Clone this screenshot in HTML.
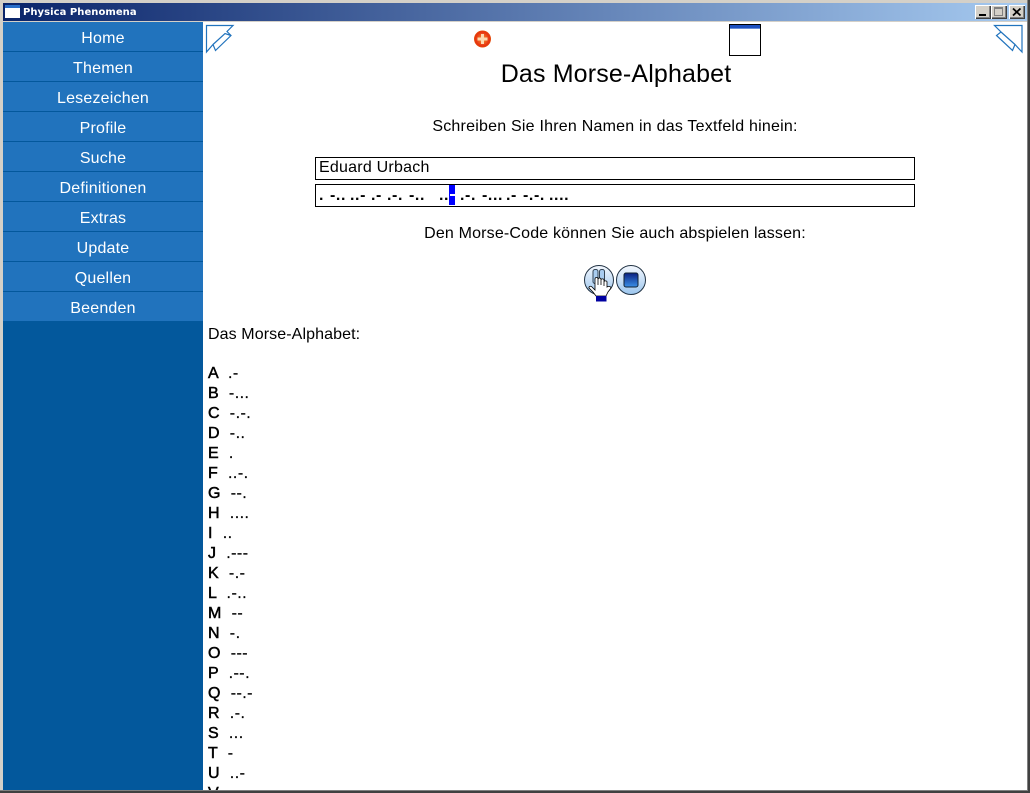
<!DOCTYPE html>
<html><head><meta charset="utf-8"><style>
html,body{margin:0;padding:0;width:1030px;height:793px;overflow:hidden;background:#fff;font-family:"Liberation Sans",Arial,sans-serif;color:#000}
div,span{position:absolute;white-space:pre}
.m{left:3px;width:200px;height:29px;background:#2173bd;border-bottom:1px solid #03589c;color:#fff;font-size:16px;line-height:34px;text-align:center;letter-spacing:.2px;overflow:hidden}
.t{font-size:16px;line-height:20px;height:20px;left:208px;letter-spacing:.45px;-webkit-text-stroke:.25px #000}
.t b{font-weight:normal;-webkit-text-stroke:.5px #000}
.c{left:203px;width:824px;text-align:center;font-size:16px;line-height:20px;letter-spacing:.22px}
.g{top:186px;font-size:16px;line-height:20px;font-weight:bold;letter-spacing:.6px}
.wb{top:5px;width:16px;height:14px;background:#d4d0c8;box-shadow:inset 1px 1px 0 #fff,inset -1px -1px 0 #404040,inset -2px -2px 0 #808080}
</style></head><body>
<div style="left:0;top:0;width:1030px;height:793px;background:#d4d0c8"></div>
<div style="left:3px;top:3px;width:1024px;height:18px;background:linear-gradient(90deg,#0a246a,#a6caf0)"></div>
<svg style="position:absolute;left:5px;top:5px" width="15" height="13"><rect width="15" height="13" fill="#fff"/><rect width="15" height="3" fill="#2a6fc9"/></svg>
<div style="left:23px;top:5px;font-size:10px;line-height:16px;font-weight:bold;color:#fff;font-family:'DejaVu Sans',sans-serif;letter-spacing:.05px">Physica Phenomena</div>
<div class="wb" style="left:975px"></div>
<div style="left:979px;top:14px;width:7px;height:2px;background:#000"></div>
<div class="wb" style="left:991px"></div>
<div style="left:994px;top:7px;width:9px;height:9px;border:1px solid #808080;border-top-width:2px;box-sizing:border-box"></div>
<div class="wb" style="left:1009px"></div>
<svg style="position:absolute;left:1009px;top:5px" width="16" height="14"><path d="M4 3.500L11.500 10.500M11.500 3.500L4 10.500" stroke="#000" stroke-width="1.800"/></svg>
<div style="left:3px;top:22px;width:1024px;height:768px;background:#fff"></div>
<div style="left:1027px;top:0;width:1px;height:793px;background:#808080"></div>
<div style="left:1028px;top:0;width:2px;height:793px;background:#404040"></div>
<div style="left:0;top:790px;width:1027px;height:1px;background:#808080"></div>
<div style="left:0;top:791px;width:1030px;height:2px;background:#404040"></div>
<div style="left:3px;top:22px;width:200px;height:768px;background:#03589c"></div>
<div class="m" style="top:22px">Home</div>
<div class="m" style="top:52px">Themen</div>
<div class="m" style="top:82px">Lesezeichen</div>
<div class="m" style="top:112px">Profile</div>
<div class="m" style="top:142px">Suche</div>
<div class="m" style="top:172px">Definitionen</div>
<div class="m" style="top:202px">Extras</div>
<div class="m" style="top:232px">Update</div>
<div class="m" style="top:262px">Quellen</div>
<div class="m" style="top:292px;border-bottom:0">Beenden</div>

<svg style="position:absolute;left:205px;top:24px" width="30" height="30" fill="none" stroke="#2173bd" stroke-width="1.200"><path d="M1.500 1.500H28L22 7.500L26 11.500L10.500 26.500L8 20.500L1.500 28ZM8 20.500L20 9.500L26 11.500"/></svg>
<svg style="position:absolute;left:993px;top:24px" width="30" height="30" fill="none" stroke="#2173bd" stroke-width="1.200"><path d="M1.500 1.500H29V28L22 20.500L19.500 26.500L3.500 11.500L8 8ZM8 8L22 20.500"/></svg>
<svg style="position:absolute;left:473px;top:30px" width="19" height="18"><defs><radialGradient id="r" cx=".5" cy=".5" r=".55"><stop offset="0" stop-color="#f5a030"/><stop offset=".75" stop-color="#e83010"/><stop offset="1" stop-color="#e06000"/></radialGradient></defs><circle cx="9.500" cy="9" r="8.500" fill="url(#r)"/><path d="M9.500 4V14M4.500 9H14.500" stroke="#fbd8b0" stroke-width="3"/></svg>
<div style="left:729px;top:24px;width:30px;height:30px;border:1px solid #000;background:#fff"></div>
<div style="left:730px;top:25px;width:30px;height:4px;background:linear-gradient(#1c50c0 70%,#9db8e8)"></div>

<div class="c" style="top:60px;font-size:25px;line-height:28px;left:204px;letter-spacing:.15px">Das Morse-Alphabet</div>
<div class="c" style="top:117px">Schreiben Sie Ihren Namen in das Textfeld hinein:</div>
<div style="left:315px;top:157px;width:598px;height:21px;border:1px solid #000"></div>
<div style="left:319px;top:158px;font-size:16px;line-height:20px;letter-spacing:.23px">Eduard Urbach</div>
<div style="left:315px;top:184px;width:598px;height:21px;border:1px solid #000"></div>
<div class="g" style="left:319px">.</div>
<div class="g" style="left:330px">-..</div>
<div class="g" style="left:350px">..-</div>
<div class="g" style="left:371px">.-</div>
<div class="g" style="left:387px">.-.</div>
<div class="g" style="left:409px">-..</div>
<div class="g" style="left:439px">..</div>
<div style="left:449px;top:185px;width:6px;height:20px;background:#0000ff"></div>
<div style="left:450px;top:194px;width:5px;height:2px;background:#fff"></div>
<div class="g" style="left:460px">.-.</div>
<div class="g" style="left:482px">-...</div>
<div class="g" style="left:506px">.-</div>
<div class="g" style="left:523px">-.-.</div>
<div class="g" style="left:549px">....</div>
<div class="c" style="top:224px;letter-spacing:.17px">Den Morse-Code können Sie auch abspielen lassen:</div>

<svg style="position:absolute;left:583px;top:265px" width="64" height="38">
<defs><linearGradient id="g" x1="0" y1="0" x2="0" y2="1"><stop offset="0" stop-color="#f4f8fe"/><stop offset="1" stop-color="#9cc6ee"/></linearGradient><linearGradient id="h" x1="0" y1="0" x2="0" y2="1"><stop offset="0" stop-color="#0a1f80"/><stop offset="1" stop-color="#3a90e8"/></linearGradient></defs>
<circle cx="16" cy="15" r="14.500" fill="url(#g)" stroke="#234" stroke-width="1"/>
<circle cx="48" cy="15" r="14.500" fill="url(#g)" stroke="#234" stroke-width="1"/>
<rect x="41" y="8" width="14" height="14" rx="2" fill="url(#h)" stroke="#123"/>
<rect x="10" y="4.500" width="5" height="14" rx="2" fill="#a8ccf0" stroke="#345"/><rect x="16.500" y="4.500" width="5" height="14" rx="2" fill="#a8ccf0" stroke="#345"/>
<path d="M6 23C5.500 21.500 8 20.500 9 22L12 25V14C12 12 15 12 15 14V20V14.500C15 12.500 18 12.500 18 14.500V20V15C18 13.500 21 13.500 21 15V21V17C21 15.500 24 15.500 24 17V22C25.500 21 27.500 21 28 23L25 27L23 31H13L10 27Z" fill="#fff" stroke="#000" stroke-width=".8"/>
<rect x="13" y="31" width="10.500" height="5.500" fill="#0000a0"/>
</svg>

<div class="t" style="top:325px;letter-spacing:.1px;-webkit-text-stroke:0">Das Morse-Alphabet:</div>
<div class="t" style="top:364px"><b style="position:static">A</b>  .-</div>
<div class="t" style="top:384px"><b style="position:static">B</b>  -...</div>
<div class="t" style="top:404px"><b style="position:static">C</b>  -.-.</div>
<div class="t" style="top:424px"><b style="position:static">D</b>  -..</div>
<div class="t" style="top:444px"><b style="position:static">E</b>  .</div>
<div class="t" style="top:464px"><b style="position:static">F</b>  ..-.</div>
<div class="t" style="top:484px"><b style="position:static">G</b>  --.</div>
<div class="t" style="top:504px"><b style="position:static">H</b>  ....</div>
<div class="t" style="top:524px"><b style="position:static">I</b>  ..</div>
<div class="t" style="top:544px"><b style="position:static">J</b>  .---</div>
<div class="t" style="top:564px"><b style="position:static">K</b>  -.-</div>
<div class="t" style="top:584px"><b style="position:static">L</b>  .-..</div>
<div class="t" style="top:604px"><b style="position:static">M</b>  --</div>
<div class="t" style="top:624px"><b style="position:static">N</b>  -.</div>
<div class="t" style="top:644px"><b style="position:static">O</b>  ---</div>
<div class="t" style="top:664px"><b style="position:static">P</b>  .--.</div>
<div class="t" style="top:684px"><b style="position:static">Q</b>  --.-</div>
<div class="t" style="top:704px"><b style="position:static">R</b>  .-.</div>
<div class="t" style="top:724px"><b style="position:static">S</b>  ...</div>
<div class="t" style="top:744px"><b style="position:static">T</b>  -</div>
<div class="t" style="top:764px"><b style="position:static">U</b>  ..-</div>
<div style="left:203px;top:780px;width:824px;height:10px;overflow:hidden"><div class="t" style="left:5px;top:4px"><b style="position:static">V</b>  ...-</div></div>
</body></html>
